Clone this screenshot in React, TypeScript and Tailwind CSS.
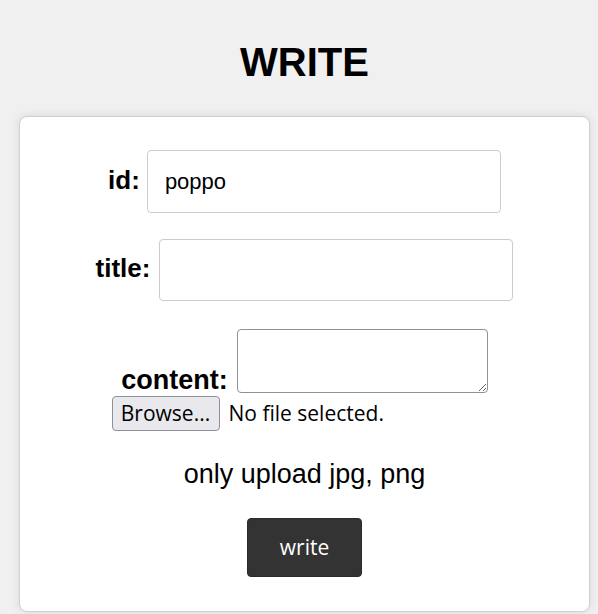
export default function App() {
  return (
    <div className="min-h-screen bg-[#f0f0f0] font-['Liberation_Sans',Arial,sans-serif] text-black">
      {/* Page title */}
      <h1 className="text-center text-[40px] font-bold leading-[46px] pt-[39px] pl-[11px]">WRITE</h1>

      {/* Form card */}
      <div className="mt-[31px] ml-[19px] w-[571px] h-[496px] bg-white border border-[#d0d0d0] rounded-[8px] shadow-[0_0_10px_rgba(0,0,0,0.1)]">
        <form className="flex flex-col items-center pt-[33px]" onSubmit={(e) => e.preventDefault()}>
          <div className="flex items-baseline gap-[7px]">
            <label className="text-[26px] font-bold">id:</label>
            <input
              defaultValue="poppo"
              className="w-[354px] h-[63px] border border-[#cccccc] rounded-[4px] px-[17px] text-[22px] outline-none"
            />
          </div>

          <div className="mt-[26px] flex items-baseline gap-[9px]">
            <label className="text-[26px] font-bold">title:</label>
            <input className="w-[354px] h-[62px] border border-[#cccccc] rounded-[4px] px-[17px] text-[22px] outline-none" />
          </div>

          <div className="mt-[28px] flex items-end gap-[9px]">
            <label className="text-[27px] font-bold leading-[26px]">content:</label>
            <textarea className="block w-[251px] h-[64px] border border-[#8f8f9d] rounded-[4px] outline-none" />
          </div>

          {/* file picker */}
          <div className="mt-[3px] w-[386px] flex items-center font-['Open_Sans',sans-serif] text-[21px]">
            <button
              type="button"
              className="h-[35px] w-[108px] bg-[#e9e9ed] border border-[#8f8f9d] rounded-[4px] leading-none"
            >
              Browse...
            </button>
            <span className="ml-[9px]">No file selected.</span>
          </div>

          <p className="mt-[28px] text-[27px] leading-[30px]">only upload jpg, png</p>

          <button
            type="submit"
            className="mt-[29px] w-[115px] h-[59px] bg-[#333333] text-white rounded-[4px] border border-[#2a2a2a] font-['Open_Sans',sans-serif] text-[21px]"
          >
            write
          </button>
        </form>
      </div>
    </div>
  );
}
